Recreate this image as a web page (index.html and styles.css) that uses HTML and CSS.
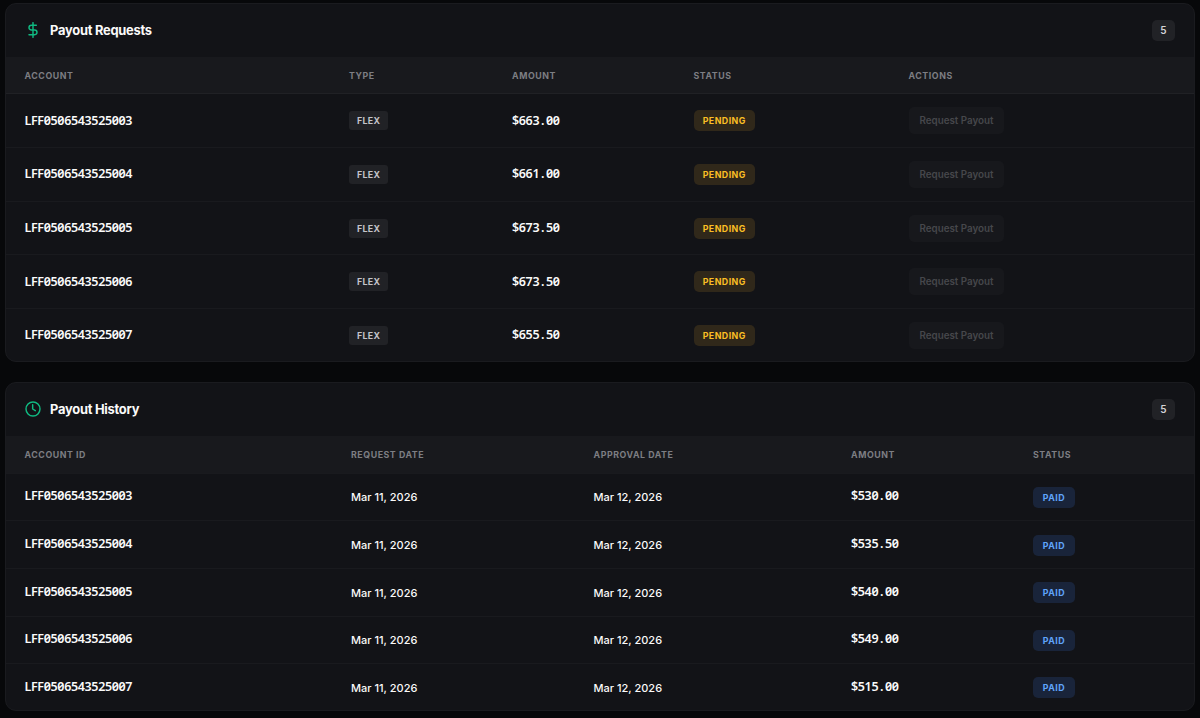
FILE: index.html
```html
<!DOCTYPE html>
<html lang="en">
<head>
  <meta charset="UTF-8">
  <title>Payouts</title>
  <link rel="stylesheet" href="styles.css">
</head>
<body>

  <section class="card">
    <div class="card-header">
      <svg class="icon" viewBox="0 0 24 24"><path d="M12 1v22M17 5H9.5a3.5 3.5 0 0 0 0 7h5a3.5 3.5 0 0 1 0 7H6"/></svg>
      <h2>Payout Requests</h2>
      <span class="count">5</span>
    </div>
    <table class="requests">
      <colgroup><col class="r-account"><col class="r-type"><col class="r-amount"><col class="r-status"><col></colgroup>
      <thead>
        <tr><th>Account</th><th>Type</th><th>Amount</th><th>Status</th><th>Actions</th></tr>
      </thead>
      <tbody>
        <tr><td class="mono">LFF0506543525003</td><td><span class="tag">Flex</span></td><td class="mono amount">$663<span class="dot">.</span>00</td><td><span class="badge pending">Pending</span></td><td><button disabled>Request Payout</button></td></tr>
        <tr><td class="mono">LFF0506543525004</td><td><span class="tag">Flex</span></td><td class="mono amount">$661<span class="dot">.</span>00</td><td><span class="badge pending">Pending</span></td><td><button disabled>Request Payout</button></td></tr>
        <tr><td class="mono">LFF0506543525005</td><td><span class="tag">Flex</span></td><td class="mono amount">$673<span class="dot">.</span>50</td><td><span class="badge pending">Pending</span></td><td><button disabled>Request Payout</button></td></tr>
        <tr><td class="mono">LFF0506543525006</td><td><span class="tag">Flex</span></td><td class="mono amount">$673<span class="dot">.</span>50</td><td><span class="badge pending">Pending</span></td><td><button disabled>Request Payout</button></td></tr>
        <tr><td class="mono">LFF0506543525007</td><td><span class="tag">Flex</span></td><td class="mono amount">$655<span class="dot">.</span>50</td><td><span class="badge pending">Pending</span></td><td><button disabled>Request Payout</button></td></tr>
      </tbody>
    </table>
  </section>

  <section class="card">
    <div class="card-header">
      <svg class="icon" viewBox="0 0 24 24"><circle cx="12" cy="12" r="10.5"/><path d="M11.5 5.5V12l4 2.5"/></svg>
      <h2>Payout History</h2>
      <span class="count">5</span>
    </div>
    <table class="history">
      <colgroup><col class="h-account"><col class="h-request"><col class="h-approval"><col class="h-amount"><col></colgroup>
      <thead>
        <tr><th>Account ID</th><th>Request Date</th><th>Approval Date</th><th>Amount</th><th>Status</th></tr>
      </thead>
      <tbody>
        <tr><td class="mono">LFF0506543525003</td><td>Mar 11, 2026</td><td>Mar 12, 2026</td><td class="mono amount">$530<span class="dot">.</span>00</td><td><span class="badge paid">Paid</span></td></tr>
        <tr><td class="mono">LFF0506543525004</td><td>Mar 11, 2026</td><td>Mar 12, 2026</td><td class="mono amount">$535<span class="dot">.</span>50</td><td><span class="badge paid">Paid</span></td></tr>
        <tr><td class="mono">LFF0506543525005</td><td>Mar 11, 2026</td><td>Mar 12, 2026</td><td class="mono amount">$540<span class="dot">.</span>00</td><td><span class="badge paid">Paid</span></td></tr>
        <tr><td class="mono">LFF0506543525006</td><td>Mar 11, 2026</td><td>Mar 12, 2026</td><td class="mono amount">$549<span class="dot">.</span>00</td><td><span class="badge paid">Paid</span></td></tr>
        <tr><td class="mono">LFF0506543525007</td><td>Mar 11, 2026</td><td>Mar 12, 2026</td><td class="mono amount">$515<span class="dot">.</span>00</td><td><span class="badge paid">Paid</span></td></tr>
      </tbody>
    </table>
  </section>

</body>
</html>
```
FILE: styles.css
```css
* { box-sizing: border-box; }
body { margin: 0; padding: 3px 5px 0; background: #07080a; color: #fafafa; font-family: Inter, sans-serif; font-size: 11px; overflow: hidden; }

.card { background: #121317; border: 1px solid #1a1b1f; border-radius: 11px; overflow: hidden; margin-bottom: 20px; }
.card-header { display: flex; align-items: center; height: 53px; padding: 0 19px 1px; }
.card-header h2 { margin: 0 0 0 9px; font-size: 12.9px; font-weight: 700; letter-spacing: -0.25px; }
.icon { width: 16px; height: 16px; fill: none; stroke: #10b981; stroke-width: 2.2; stroke-linecap: round; stroke-linejoin: round; }
.count { margin-left: auto; width: 23px; line-height: 21px; text-align: center; background: #212226; border-radius: 5px; font-size: 10px; font-weight: 600; color: #d4d4d8; }

table { width: 100%; border-collapse: separate; border-spacing: 0; table-layout: fixed; }
th, td { padding: 0 0 0 18.5px; text-align: left; vertical-align: middle; }
th { height: 37.3px; padding-top: 1px; background: #18191d; border-bottom: 1px solid #202125; font-size: 8.8px; font-weight: 700; letter-spacing: 0.56px; text-transform: uppercase; color: #7d7e83; }
.history th { border-bottom-color: #191a1e; }
td { border-bottom: 1px solid #191a1e; font-weight: 500; white-space: nowrap; }
.requests td { height: 53.7px; }
.history td { height: 47.7px; padding-top: 1px; }
.requests tr:last-child td { height: 52.2px; border-bottom: none; }
.history tr:last-child td { height: 46.2px; border-bottom: none; }

.r-account { width: 324.5px; }
.r-type { width: 163px; }
.r-amount { width: 181.5px; }
.r-status { width: 215px; }
.h-account { width: 326.5px; }
.h-request { width: 242.5px; }
.h-approval { width: 257.5px; }
.h-amount { width: 182px; }

/* slashed zeros for ids and amounts */
.mono { font-family: "Noto Sans", monospace; font-size: 12.5px; font-weight: 600; font-feature-settings: "zero"; letter-spacing: -0.35px; line-height: 16px; }
.history .mono { padding-bottom: 2px; }
.dot { display: inline-block; width: 6.8px; text-align: center; }

.tag, .badge { display: inline-block; vertical-align: middle; font-size: 8.8px; font-weight: 700; text-transform: uppercase; }
.tag { padding: 0 8px; line-height: 19px; border-radius: 3px; letter-spacing: 0.3px; background: #212226; color: #c4c4ca; }
.badge { padding: 0 9.2px; line-height: 21px; border-radius: 5px; letter-spacing: 0.47px; }
.pending { background: #30281a; color: #fbbf24; }
.paid { padding: 0 9.8px; background: #19243a; color: #60a5fa; }
button { display: block; padding: 0 11px; height: 27px; border: none; border-radius: 5px; background: #17181c; color: #46474b; font-family: inherit; font-size: 9.8px; font-weight: 600; }
```
